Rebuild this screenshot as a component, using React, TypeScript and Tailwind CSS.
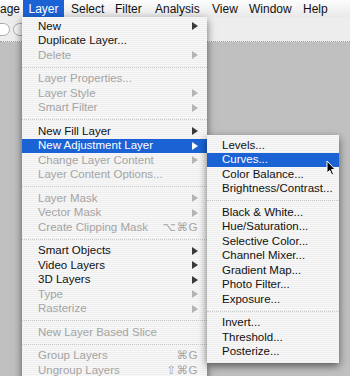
import React from 'react';

type Item =
  | { sep: true }
  | { label: string; disabled?: boolean; sub?: boolean; shortcut?: string; active?: boolean };

const layerMenu: Item[] = [
  { label: 'New', sub: true },
  { label: 'Duplicate Layer...' },
  { label: 'Delete', disabled: true, sub: true },
  { sep: true },
  { label: 'Layer Properties...', disabled: true },
  { label: 'Layer Style', disabled: true, sub: true },
  { label: 'Smart Filter', disabled: true, sub: true },
  { sep: true },
  { label: 'New Fill Layer', sub: true },
  { label: 'New Adjustment Layer', sub: true, active: true },
  { label: 'Change Layer Content', disabled: true, sub: true },
  { label: 'Layer Content Options...', disabled: true },
  { sep: true },
  { label: 'Layer Mask', disabled: true, sub: true },
  { label: 'Vector Mask', disabled: true, sub: true },
  { label: 'Create Clipping Mask', disabled: true, shortcut: '⌥⌘G' },
  { sep: true },
  { label: 'Smart Objects', sub: true },
  { label: 'Video Layers', sub: true },
  { label: '3D Layers', sub: true },
  { label: 'Type', disabled: true, sub: true },
  { label: 'Rasterize', disabled: true, sub: true },
  { sep: true },
  { label: 'New Layer Based Slice', disabled: true },
  { sep: true },
  { label: 'Group Layers', disabled: true, shortcut: '⌘G' },
  { label: 'Ungroup Layers', disabled: true, shortcut: '⇧⌘G' },
];

const adjustMenu: Item[] = [
  { label: 'Levels...' },
  { label: 'Curves...', active: true },
  { label: 'Color Balance...' },
  { label: 'Brightness/Contrast...' },
  { sep: true },
  { label: 'Black & White...' },
  { label: 'Hue/Saturation...' },
  { label: 'Selective Color...' },
  { label: 'Channel Mixer...' },
  { label: 'Gradient Map...' },
  { label: 'Photo Filter...' },
  { label: 'Exposure...' },
  { sep: true },
  { label: 'Invert...' },
  { label: 'Threshold...' },
  { label: 'Posterize...' },
];

const Arrow = ({ color }: { color: string }) => (
  <svg width="6" height="8" viewBox="0 0 6 8">
    <path d="M0 0 L6 4 L0 8 Z" fill={color} />
  </svg>
);

const MenuRows = ({ items, padLeft }: { items: Item[]; padLeft: string }) => (
  <>
    {items.map((it, i) => {
      if ('sep' in it) {
        return (
          <div key={i} className="h-[9px] flex items-center">
            <div className="w-full border-t border-dotted border-[#c8c8c8]" />
          </div>
        );
      }
      const color = it.active ? 'text-white' : it.disabled ? 'text-[#a4a4a4]' : 'text-[#111]';
      return (
        <div
          key={i}
          className={`h-[14.5px] flex items-center justify-between pr-[9px] ${padLeft} ${color} ${
            it.active ? 'bg-[#1b62d4]' : ''
          }`}
        >
          <span className="whitespace-nowrap leading-none">{it.label}</span>
          {it.sub && <Arrow color={it.active ? '#ffffff' : it.disabled ? '#b4b4b4' : '#3a3a3a'} />}
          {it.shortcut && <span className="leading-none tracking-[0.5px]">{it.shortcut}</span>}
        </div>
      );
    })}
  </>
);

const stripes =
  'bg-[repeating-linear-gradient(180deg,#f7f7f7_0px,#f7f7f7_1px,#efefef_1px,#efefef_2px)]';

export default function App() {
  return (
    <div
      className="relative w-[350px] h-[376px] overflow-hidden bg-[#c0c0c0] flex flex-col text-[11.5px]"
      style={{ fontFamily: '"Lucida Grande", "Liberation Sans", "DejaVu Sans", sans-serif' }}
    >
      {/* menu bar */}
      <div className="h-[17px] shrink-0 flex items-stretch bg-linear-to-b from-[#fdfdfd] to-[#e9e9e9] text-[#111] text-[12px]">
        <span className="w-[23px] flex items-center">age</span>
        <span className="w-[41px] flex items-center justify-center bg-[#1b62d4] text-white">Layer</span>
        <span className="w-[7px]" />
        <span className="w-[44px] flex items-center">Select</span>
        <span className="w-[40px] flex items-center">Filter</span>
        <span className="w-[57px] flex items-center">Analysis</span>
        <span className="w-[37px] flex items-center">View</span>
        <span className="w-[54px] flex items-center">Window</span>
        <span className="flex items-center">Help</span>
      </div>

      {/* options bar */}
      <div className="h-[25px] shrink-0 bg-[#ededed] border-b border-dotted border-[#9c9c9c] flex items-center">
        <div className="-ml-[7px] w-[17px] h-[13px] rounded-full bg-white border border-[#a8a8a8]" />
        <div className="ml-[3px] w-[17px] h-[13px] rounded-full bg-[#f4f4f4] border border-[#a8a8a8]" />
      </div>

      {/* canvas */}
      <div className="flex-1 bg-[#c0c0c0]" />

      {/* Layer menu */}
      <div
        className={`absolute left-[22px] top-[17px] w-[185px] pt-[2px] pb-[4px] ${stripes} shadow-[0_3px_8px_rgba(0,0,0,0.55)]`}
      >
        <MenuRows items={layerMenu} padLeft="pl-[16px]" />
      </div>

      {/* New Adjustment Layer submenu */}
      <div
        className={`absolute left-[207px] top-[135px] w-[132px] pt-[3px] pb-[4px] ${stripes} shadow-[0_3px_8px_rgba(0,0,0,0.55)]`}
      >
        <MenuRows items={adjustMenu} padLeft="pl-[15px]" />
      </div>

      {/* cursor */}
      <svg className="absolute left-[326px] top-[160px]" width="10" height="16" viewBox="0 0 10 16">
        <path d="M1 1 L1 13 L3.8 10.4 L5.8 15 L7.6 14.2 L5.6 9.6 L9.2 9.6 Z" fill="#000" stroke="#fff" strokeWidth="1" />
      </svg>
    </div>
  );
}
